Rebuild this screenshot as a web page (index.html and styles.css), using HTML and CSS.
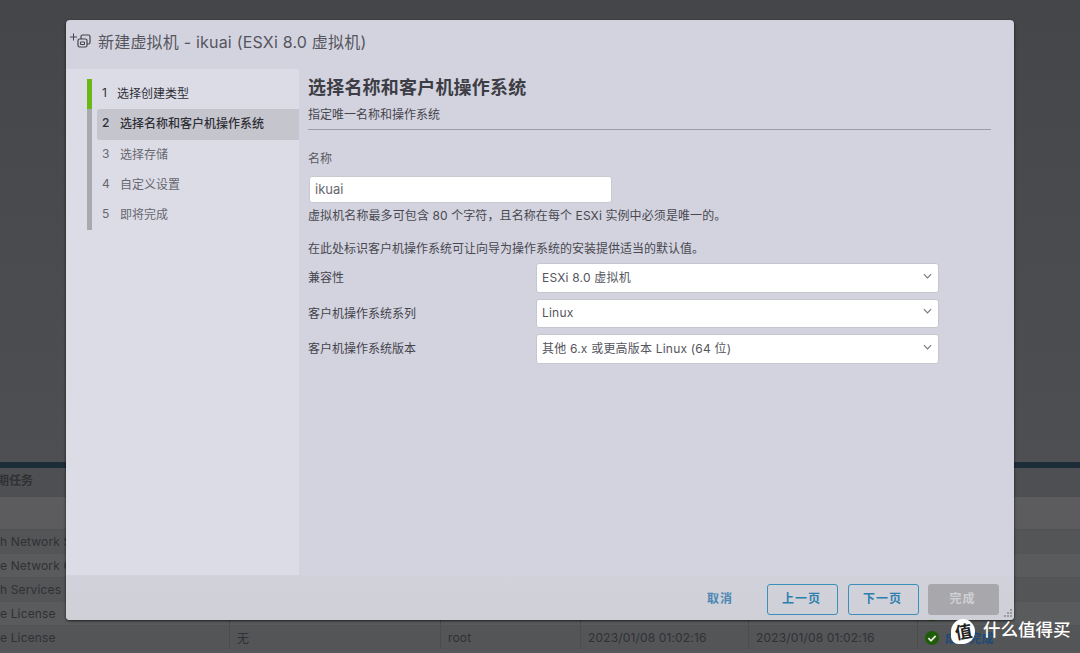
FILE: index.html
```html
<!DOCTYPE html>
<html lang="zh-CN">
<head>
  <meta charset="UTF-8" />
  <title>新建虚拟机 - ikuai</title>
  <link rel="stylesheet" href="styles.css">
</head>
<body>
  <div class="backdrop">
    <div class="top-area"></div>
    <div class="band"></div>
    <div class="tasks-title">期任务</div>
    <div class="tasks-tools"></div>
    <div class="task-row odd"><div class="cell first">h Network S</div></div>
    <div class="task-row"><div class="cell first">e Network C</div></div>
    <div class="task-row odd"><div class="cell first">h Services</div></div>
    <div class="task-row">
      <div class="cell first">e License</div>
      <div class="cell c2"></div>
      <div class="cell c3"></div>
      <div class="cell c4"></div>
      <div class="cell c5"></div>
      <div class="cell c6">
        <svg class="ok-icon" viewBox="0 0 14 14"><circle cx="7" cy="7" r="7" fill="#1f5c08"/><path d="M3.4 7.2l2.6 2.6 4.6-5" fill="none" stroke="#e8e8e8" stroke-width="1.8"/></svg>
      </div>
    </div>
    <div class="task-row odd">
      <div class="cell first">e License</div>
      <div class="cell c2">无</div>
      <div class="cell c3">root</div>
      <div class="cell c4">2023/01/08 01:02:16</div>
      <div class="cell c5">2023/01/08 01:02:16</div>
      <div class="cell c6">
        <svg class="ok-icon" viewBox="0 0 14 14"><circle cx="7" cy="7" r="7" fill="#1f5c08"/><path d="M3.4 7.2l2.6 2.6 4.6-5" fill="none" stroke="#e8e8e8" stroke-width="1.8"/></svg>
        <span class="ok-text">成功完成</span>
      </div>
    </div>
  </div>

  <div class="dialog">
    <div class="dialog-header">
      <svg class="vm-icon" viewBox="0 0 24 17">
        <path d="M1 5h7M4.500 1.500v7" stroke="#44444c" stroke-width="1" fill="none"/>
        <rect x="12" y="3" width="9" height="9" rx="1.500" fill="none" stroke="#44444c" stroke-width="1.200"/>
        <rect x="9" y="7" width="9" height="8" rx="1.500" fill="#d3d3df" stroke="#44444c" stroke-width="1.200"/>
        <path d="M11.500 10h4v2.500h-4z" fill="none" stroke="#44444c" stroke-width="1"/>
      </svg>
      <span class="dialog-title">新建虚拟机 - ikuai (ESXi 8.0 虚拟机)</span>
    </div>

    <div class="dialog-body">
      <div class="steps">
        <ol class="step-list">
          <li class="step done"><span class="step-no">1</span>选择创建类型</li>
          <li class="step current"><span class="step-no">2</span>选择名称和客户机操作系统</li>
          <li class="step"><span class="step-no">3</span>选择存储</li>
          <li class="step"><span class="step-no">4</span>自定义设置</li>
          <li class="step"><span class="step-no">5</span>即将完成</li>
        </ol>
      </div>

      <div class="content">
        <h2 class="content-title">选择名称和客户机操作系统</h2>
        <p class="content-sub">指定唯一名称和操作系统</p>

        <label class="field-label" for="vm-name">名称</label>
        <input id="vm-name" class="text-input" type="text" value="ikuai" />
        <p class="hint">虚拟机名称最多可包含 80 个字符，且名称在每个 ESXi 实例中必须是唯一的。</p>
        <p class="hint hint-os">在此处标识客户机操作系统可让向导为操作系统的安装提供适当的默认值。</p>

        <div class="os-form">
          <div class="os-label">兼容性</div>
          <div class="select-box">ESXi 8.0 虚拟机
            <svg class="chevron" viewBox="0 0 10 6"><path d="M1 1l4 4 4-4" fill="none" stroke="#77777f" stroke-width="1.300"/></svg>
          </div>
          <div class="os-label">客户机操作系统系列</div>
          <div class="select-box">Linux
            <svg class="chevron" viewBox="0 0 10 6"><path d="M1 1l4 4 4-4" fill="none" stroke="#77777f" stroke-width="1.300"/></svg>
          </div>
          <div class="os-label">客户机操作系统版本</div>
          <div class="select-box">其他 6.x 或更高版本 Linux (64 位)
            <svg class="chevron" viewBox="0 0 10 6"><path d="M1 1l4 4 4-4" fill="none" stroke="#77777f" stroke-width="1.300"/></svg>
          </div>
        </div>
      </div>
    </div>

    <div class="dialog-footer">
      <button class="btn btn-link">取消</button>
      <button class="btn btn-outline">上一页</button>
      <button class="btn btn-outline btn-next">下一页</button>
      <button class="btn btn-disabled">完成</button>
      <svg class="grip" viewBox="0 0 8 8"><path d="M6 0h2v2H6zM3 3h2v2H3zM6 3h2v2H6zM0 6h2v2H0zM3 6h2v2H3zM6 6h2v2H6z" fill="#9a9aa2"/></svg>
    </div>
  </div>

  <div class="watermark">
    <span class="wm-logo"><span class="wm-char">值</span></span>
    <span class="wm-text">什么值得买</span>
  </div>
</body>
</html>
```

FILE: styles.css
```css
* {
  margin: 0;
  padding: 0;
  box-sizing: border-box;
}

html, body {
  height: 653px;
  overflow: hidden;
}

body {
  font-family: Inter, "Open Sans", "Noto Sans CJK SC", sans-serif;
  font-size: 12px;
  background: #4f5053;
  color: #3f3f47;
  position: relative;
}

/* Page behind the dialog */
.backdrop {
  width: 1080px;
  height: 653px;
  display: flex;
  flex-direction: column;
  background: #57585a;
  color: #303134;
}

.top-area {
  height: 462px;
  background: linear-gradient(180deg, #454649 0%, #4e4f53 100%);
}

.band {
  height: 6px;
  background: #1d2d38;
}

.tasks-title {
  height: 29px;
  line-height: 25px;
  background: #4e4f52;
  font-weight: 700;
  text-indent: -3px;
  overflow: hidden;
  white-space: nowrap;
}

.tasks-tools {
  height: 33px;
  background: #5c5c5e;
  border-bottom: 1px solid #505153;
}

.task-row {
  height: 24px;
  display: flex;
  align-items: center;
  background: #5a5b5c;
  font-size: 12px;
  letter-spacing: 0.15px;
  border-bottom: 1px solid #535456;
}

.task-row.odd {
  background: #545557;
}

.cell {
  height: 100%;
  padding: 0 0 1px 7px;
  display: flex;
  align-items: center;
  border-right: 1px solid #4b4c4e;
  white-space: nowrap;
}

.cell.first { width: 229px; padding-left: 0; border-right: 0; overflow: hidden; }
.cell.c2 { width: 212px; border-left: 1px solid #4b4c4e; }
.cell.c3 { width: 140px; }
.cell.c4 { width: 168px; }
.cell.c5 { width: 169px; }
.cell.c6 { flex: 1; border-right: 0; gap: 6px; padding-bottom: 0; }

.ok-icon {
  width: 14px;
  height: 14px;
  flex: none;
}

.ok-text {
  color: #1d4a78;
  font-weight: 700;
}

/* Dialog */
.dialog {
  position: absolute;
  left: 66px;
  top: 20px;
  width: 948px;
  height: 600px;
  display: flex;
  flex-direction: column;
  background: #d3d3df;
  border-radius: 4px;
  box-shadow: 0 1px 3px rgba(0, 0, 0, 0.7);
}

.dialog-header {
  height: 49px;
  flex: none;
  display: flex;
  align-items: flex-start;
  padding: 12px 0 0 3px;
}

.vm-icon {
  width: 24px;
  height: 17px;
  margin-right: 5px;
}

.dialog-title {
  font-size: 16px;
  line-height: 21px;
  color: #55555d;
  letter-spacing: 0.2px;
}

.dialog-body {
  flex: 1;
  display: flex;
  min-height: 0;
}

.steps {
  width: 233px;
  flex: none;
  background: #dcdce6;
  padding: 10px 0 0 21px;
}

.step-list {
  list-style: none;
  border-left: 5px solid #a9a9ae;
}

.step {
  height: 30.3px;
  display: flex;
  align-items: center;
  padding-left: 10px;
  padding-bottom: 3px;
  color: #67676f;
}

.step-no {
  width: 18px;
  flex: none;
}

.step.done,
.step.current {
  color: #2f2f37;
}

.step.done {
  margin-left: -5px;
  border-left: 5px solid #6ab816;
}

.step.done .step-no {
  width: 15px;
}

.step.current {
  padding-left: 5px;
  margin-left: 5px;
  background: #c5c5cd;
  border-radius: 3px 0 0 3px;
  font-weight: 500;
}

.content {
  flex: 1;
  padding: 6px 23px 0 9px;
}

.content-title {
  font-size: 18px;
  line-height: 26px;
  font-weight: 700;
  color: #3d3d45;
  letter-spacing: 0.2px;
}

.content-sub {
  height: 29px;
  line-height: 27px;
  color: #45454d;
  border-bottom: 1px solid #9c9ca6;
}

.field-label {
  display: block;
  margin-top: 20px;
  line-height: 17px;
  color: #5a5a62;
}

.text-input {
  display: block;
  width: 303px;
  height: 27px;
  margin: 9px 0 0 1px;
  padding: 0 5px 2px;
  border: 1px solid #c9c9d0;
  border-radius: 3px;
  background: #fff;
  font: inherit;
  font-size: 13px;
  color: #66666e;
}

.hint {
  margin-top: 5px;
  line-height: 16px;
  color: #48484f;
  white-space: nowrap;
  letter-spacing: 0.1px;
}

.hint-os {
  margin-top: 17px;
  letter-spacing: 0;
}

.os-form {
  display: grid;
  grid-template-columns: 228px 403px;
  grid-auto-rows: 29.5px;
  row-gap: 6px;
  margin-top: 6px;
  align-items: center;
}

.os-label {
  color: #44444c;
  padding-bottom: 2px;
}

.select-box {
  height: 100%;
  display: flex;
  align-items: center;
  justify-content: space-between;
  padding: 0 6px 2px 5px;
  background: #fff;
  border: 1px solid #c6c6ce;
  border-radius: 3px;
  color: #55555d;
  font-size: 12px;
  letter-spacing: 0.2px;
}

.chevron {
  width: 9px;
  height: 6px;
  margin-top: -2px;
}

.dialog-footer {
  height: 45px;
  flex: none;
  display: flex;
  align-items: flex-start;
  justify-content: flex-end;
  gap: 9px;
  padding: 9px 15px 0 0;
  background: linear-gradient(180deg, #d2d2dc 0%, #cfcfd7 100%);
  border-radius: 0 0 4px 4px;
  position: relative;
}

.btn {
  width: 71px;
  height: 31px;
  padding: 0 2px 4px 0;
  font: inherit;
  font-weight: 700;
  letter-spacing: 1px;
  border-radius: 3px;
  background: transparent;
  border: 1px solid transparent;
}

.btn-link {
  color: #4a87b3;
  width: 70px;
  padding-right: 6px;
}

.btn-outline {
  color: #2f7fae;
  border-color: #3b8fb8;
}

.btn-next {
  margin-left: 1px;
}

.btn-disabled {
  color: #cfcfd3;
  background: #a8a8ac;
}

.grip {
  position: absolute;
  right: 2px;
  bottom: 3px;
  width: 8px;
  height: 8px;
}

/* Site watermark, bottom right */
.watermark {
  position: absolute;
  left: 951px;
  top: 619px;
  display: flex;
  align-items: flex-start;
  gap: 8px;
}

.wm-logo {
  width: 24px;
  height: 25px;
  border-radius: 50% 50% 50% 30%;
  background: #fff;
  display: flex;
  align-items: center;
  justify-content: center;
}

.wm-char {
  color: #222;
  font-size: 17px;
  font-weight: 700;
  line-height: 24px;
  transform: rotate(-10deg);
}

.wm-text {
  font-size: 17.5px;
  line-height: 21px;
  color: #fff;
  font-weight: 500;
}
```
